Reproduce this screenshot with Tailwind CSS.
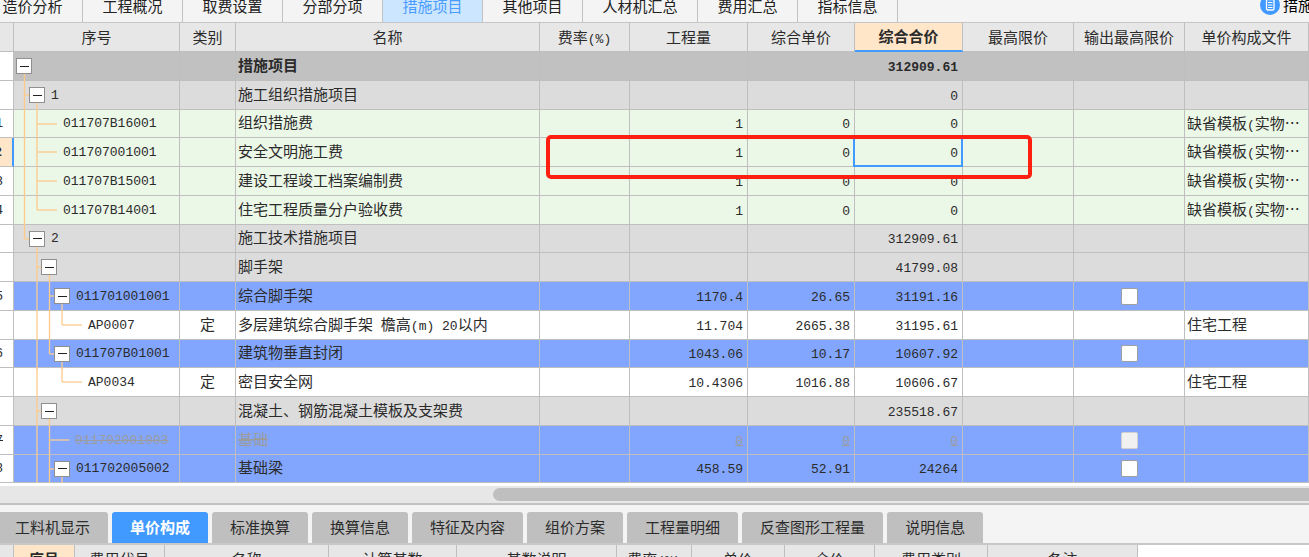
<!DOCTYPE html>
<html lang="zh-CN">
<head>
<meta charset="utf-8">
<title>措施项目</title>
<script src="https://cdn.jsdelivr.net/npm/@tailwindcss/browser@4"></script>
</head>
<body class="flex h-screen flex-col overflow-hidden bg-white font-['Noto_Sans_CJK_SC',sans-serif] text-[15px] leading-5 text-[#2b2b2b]">

<header class="flex h-[22px] shrink-0 items-end overflow-hidden bg-[#f4f4f4] whitespace-nowrap">
  <nav id="modules" class="-ml-[17px] flex shrink-0" aria-label="模块"></nav>
  <a href="#" class="-mr-1 ml-auto flex h-[35px] items-center gap-[3px] text-black">
    <svg class="size-5" viewBox="0 0 20 20" fill="none" aria-hidden="true">
      <circle cx="10" cy="10" r="10" fill="#409aff"/>
      <path d="M6.5 4.5h7.500v9.5l-1 1h-5.500l-1-1z" stroke="#fff" stroke-width="1.3"/>
      <path d="M8 7.5h4.500M8 10h4.500M8 12.5h4.500" stroke="#fff"/>
    </svg>
    <span>措施</span>
  </a>
</header>

<main class="relative shrink-0 overflow-hidden border-t border-[#c6c6c6]">
  <table class="w-full table-fixed border-separate border-spacing-0 whitespace-nowrap">
    <colgroup>
      <col class="w-[14px]"><col class="w-[166px]"><col class="w-[56px]"><col class="w-[304px]"><col class="w-[90px]"><col class="w-[118px]"><col class="w-[107px]"><col class="w-[108px]"><col class="w-[111px]"><col class="w-[111px]"><col>
    </colgroup>
    <thead><tr id="head" class="h-[29px] bg-[#e7e7e7]"></tr></thead>
    <tbody id="rows"></tbody>
  </table>
  <div class="pointer-events-none absolute top-[112px] left-[546px] h-[44px] w-[486px] rounded-[5px] border-4 border-[#ff1f10]"></div>
</main>

<div class="mt-[3px] h-[17px] shrink-0 bg-[#e7e7e7] pt-[2px] pl-[493px]">
  <div class="h-[13px] rounded-l-full bg-[#bfbfbf]"></div>
</div>

<section class="shrink-0 border-t-2 border-[#c2c2c2] bg-[#f4f4f4] pt-[7px]">
  <nav id="details" class="-ml-[3px] flex gap-1 border-b-2 border-[#c8c8c8] whitespace-nowrap" aria-label="明细"></nav>
  <div class="bg-white">
    <table class="w-[1138px] table-fixed border-separate border-spacing-0 whitespace-nowrap">
      <colgroup>
        <col class="w-[14px]"><col class="w-[61px]"><col class="w-[90px]"><col class="w-[164px]"><col class="w-[128px]"><col class="w-[160px]"><col class="w-[75px]"><col class="w-[93px]"><col class="w-[90px]"><col class="w-[113px]"><col class="w-[150px]">
      </colgroup>
      <thead><tr id="subhead" class="h-[29px] bg-[#e7e7e7]"></tr></thead>
    </table>
  </div>
</section>

<script>
const byId = id => document.getElementById(id);
const num = t => `<span class="font-['Liberation_Mono',monospace] text-[13px] leading-none">${t}</span>`;
const mixed = t => t.replace(/[A-Za-z0-9.()% ]+/g, num);

byId('modules').innerHTML = ['造价分析', '工程概况', '取费设置', '分部分项', '措施项目', '其他项目', '人材机汇总', '费用汇总', '指标信息']
  .map(t => `<button class="${t === '措施项目' ? 'bg-[#cce6ff] text-[#4a9cff]' : 'text-[#222]'} h-[31px] border-r border-[#c2c2c2] px-[19px] pb-[2px] ${t.length === 5 ? 'w-[115px]' : 'w-[100px]'}">${t}</button>`).join('');

byId('details').innerHTML = ['工料机显示', '单价构成', '标准换算', '换算信息', '特征及内容', '组价方案', '工程量明细', '反查图形工程量', '说明信息']
  .map(t => `<button class="${t === '单价构成' ? 'bg-[#409aff] font-bold text-white' : 'bg-[#bfbfbf]'} h-[31px] rounded-t-[3px] px-[18px] pb-[2px]">${t}</button>`).join('');

const th = (t, active) => `<th class="${active ? 'border-b-2 border-b-[#409aff] bg-[#ffe6c9] font-bold' : 'border-b border-b-[#bfbfbf] font-normal'} border-r border-r-[#bfbfbf] p-0 pb-px">${mixed(t)}</th>`;
byId('head').innerHTML = ['', '序号', '类别', '名称', '费率(%)', '工程量', '综合单价', '综合合价', '最高限价', '输出最高限价', '单价构成文件'].map(t => th(t, t === '综合合价')).join('');
byId('subhead').innerHTML = ['', '序号', '费用代号', '名称', '计算基数', '基数说明', '费率(%)', '单价', '合价', '费用类别', '备注']
  .map(t => `<th class="${t === '序号' ? 'bg-[#ffe6c9] font-bold' : 'font-normal'} border-r border-[#bfbfbf] p-0 pb-px">${mixed(t)}</th>`).join('');

// x of the connector line of each tree level
const X = [10.5, 23, 35.5, 48];
const BOX = ['ml-[2px]', 'ml-[15px]', 'ml-[27px]', 'ml-[40px]'];
const LEAF = ['', 'ml-[49px]', 'ml-[61px]', 'ml-[74px]'];

// full: levels passing through; half: level that ends here; node: level of a toggle; leaf: level a leaf hangs from
function tree({full = [], half, node, leaf, code = ''}) {
  let p = full.map(l => `<line x1="${X[l]}" x2="${X[l]}" y1="0" y2="29"/>`).join('');
  if (half !== undefined) p += `<line x1="${X[half]}" x2="${X[half]}" y1="0" y2="14"/>`;
  if (node !== undefined) p += `<line x1="${X[node]}" x2="${X[node]}" y1="14" y2="29"/>`;
  if (node) p += `<line x1="${X[node - 1]}" x2="${X[node]}" y1="14" y2="14"/>`;
  if (leaf !== undefined) p += `<line x1="${X[leaf]}" x2="${X[leaf] + 20}" y1="14" y2="14"/>`;
  const lines = `<svg class="absolute top-0 left-0 h-[29px] w-full" stroke="#fccb8c" stroke-width="1.3" aria-hidden="true">${p}</svg>`;
  const toggle = node === undefined ? '' : `<button aria-label="折叠" class="${BOX[node]} relative mr-[6px] flex size-4 items-center justify-center border border-[#8f8f8f] bg-white"><span class="h-px w-[9px] bg-[#222]"></span></button>`;
  return `${lines}<div class="relative flex items-center ${leaf === undefined ? '' : LEAF[leaf]}">${toggle}${num(code)}</div>`;
}

const FILE = '缺省模板(实物…';
const BG = {root: 'bg-[#c1c1c1] font-bold', group: 'bg-[#dcdcdc]', green: 'bg-[#ebf7e7]', blue: 'bg-[#82a6fe]', white: 'bg-white', off: 'bg-[#82a6fe] text-[#9c9c9c] line-through'};
// [row number, style, tree, category, name, quantity, unit price, total, file]
const data = [
  ['', 'root', {node: 0}, '', '措施项目', '', '', '312909.61', ''],
  ['', 'group', {full: [0], node: 1, code: '1'}, '', '施工组织措施项目', '', '', '0', ''],
  ['1', 'green', {full: [0, 1], leaf: 1, code: '011707B16001'}, '', '组织措施费', '1', '0', '0', FILE],
  ['2', 'green', {full: [0, 1], leaf: 1, code: '011707001001'}, '', '安全文明施工费', '1', '0', '0', FILE],
  ['3', 'green', {full: [0, 1], leaf: 1, code: '011707B15001'}, '', '建设工程竣工档案编制费', '1', '0', '0', FILE],
  ['4', 'green', {full: [0], half: 1, leaf: 1, code: '011707B14001'}, '', '住宅工程质量分户验收费', '1', '0', '0', FILE],
  ['', 'group', {half: 0, node: 1, code: '2'}, '', '施工技术措施项目', '', '', '312909.61', ''],
  ['', 'group', {full: [1], node: 2}, '', '脚手架', '', '', '41799.08', ''],
  ['5', 'blue', {full: [1, 2], node: 3, code: '011701001001'}, '', '综合脚手架', '1170.4', '26.65', '31191.16', ''],
  ['', 'white', {full: [1, 2], half: 3, leaf: 3, code: 'AP0007'}, '定', '多层建筑综合脚手架 檐高(m) 20以内', '11.704', '2665.38', '31195.61', '住宅工程'],
  ['6', 'blue', {full: [1], half: 2, node: 3, code: '011707B01001'}, '', '建筑物垂直封闭', '1043.06', '10.17', '10607.92', ''],
  ['', 'white', {full: [1], half: 3, leaf: 3, code: 'AP0034'}, '定', '密目安全网', '10.4306', '1016.88', '10606.67', '住宅工程'],
  ['', 'group', {full: [1], node: 2}, '', '混凝土、钢筋混凝土模板及支架费', '', '', '235518.67', ''],
  ['7', 'off', {full: [1, 2], leaf: 2, code: '011702001003'}, '', '基础', '0', '0', '0', ''],
  ['8', 'blue', {full: [1, 2], node: 3, code: '011702005002'}, '', '基础梁', '458.59', '52.91', '24264', ''],
];

const td = (html, cls = '') => `<td class="border-r border-b border-[#bfbfbf] p-0 ${cls}">${html}</td>`;
byId('rows').innerHTML = data.map(([n, style, t, cat, name, qty, price, total, file]) => {
  const current = n === '2';
  const check = style === 'blue' || style === 'off'
    ? `<input type="checkbox" aria-label="输出最高限价 ${t.code}" ${style === 'off' ? 'disabled' : ''} class="mx-auto block size-[17px] appearance-none rounded-[2px] border border-[#a0a0a0] bg-white disabled:border-[#d0d0d0] disabled:bg-[#f1f1f1]">` : '';
  const marker = current ? '<div class="absolute -inset-px -left-[2px] border-2 border-[#409aff]"></div>' : '';
  return `<tr class="h-[29px] [&:nth-child(4n-1)]:h-[28px] ${BG[style]}">`
    + td(`<div class="flex justify-end overflow-hidden pr-[10px] ${style === 'off' ? 'text-[#2b2b2b] line-through' : ''}">${num(n)}</div>`, current ? 'border-r-2 border-r-[#409aff] bg-[#ffe6c9] font-bold' : 'bg-white')
    + td(tree(t), 'relative')
    + td(cat, 'pb-[3px] text-center')
    + td(mixed(name), 'pb-[3px] pl-[2px]')
    + td('')
    + td(num(qty), 'pr-1 pb-[3px] text-right')
    + td(num(price), 'pr-1 pb-[3px] text-right')
    + td(num(total) + marker, 'relative pr-1 pb-[3px] text-right')
    + td('')
    + td(check)
    + td(mixed(file), 'overflow-hidden pb-[2px] pl-[2px]')
    + '</tr>';
}).join('');
</script>
</body>
</html>
